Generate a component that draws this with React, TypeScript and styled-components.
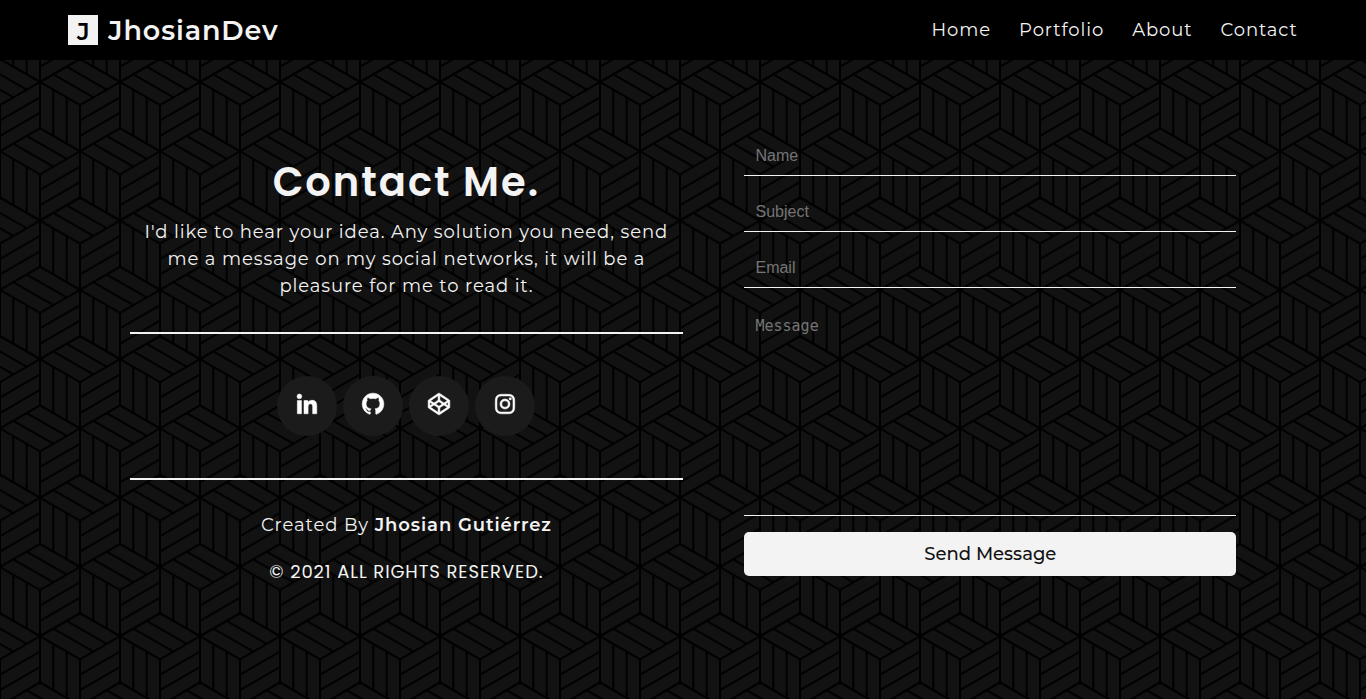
import React from 'react';
import styled, { createGlobalStyle } from 'styled-components';
import { BiLogoLinkedin, BiLogoGithub, BiLogoCodepen, BiLogoInstagram } from 'react-icons/bi';

const GlobalStyle = createGlobalStyle`
  *, *::before, *::after { box-sizing: border-box; }
  body {
    margin: 0;
    background: #121212;
    color: #f3f3f3;
    font-family: Montserrat, Inter, sans-serif;
    font-size: 18px;
    line-height: 27px;
    letter-spacing: 0.05em;
  }
`;

const Page = styled.div`
  position: relative;
  display: flex;
  flex-direction: column;
  min-height: 100vh;
  overflow: hidden;
`;

const Backdrop = styled.svg`
  position: absolute;
  inset: 0;
  width: 100%;
  height: 100%;
  z-index: -1;
`;

const Header = styled.header`
  display: flex;
  align-items: center;
  justify-content: space-between;
  height: 60px;
  padding: 0 5%;
  background: #000;
`;

const Brand = styled.a`
  display: flex;
  align-items: center;
  gap: 10px;
  color: #f3f3f3;
  font-size: 27px;
  font-weight: 600;
  text-decoration: none;
`;

const BrandMark = styled.span`
  display: flex;
  justify-content: center;
  align-items: flex-end;
  width: 30px;
  height: 30px;
  background: #f3f3f3;
  color: #000;
  font-size: 24px;
  font-weight: 600;
  letter-spacing: normal;
  line-height: 27px;
`;

const Nav = styled.nav`
  display: flex;
  gap: 28px;
`;

const NavLink = styled.a`
  color: #f3f3f3;
  text-decoration: none;
`;

const Contact = styled.main`
  display: grid;
  grid-template-columns: 1fr 1fr;
  width: 90%;
  margin: 0 auto;
  padding: 76px 0;
`;

const Intro = styled.section`
  display: flex;
  flex-direction: column;
  padding: 16px 0 0 10%;
  text-align: center;
`;

const Title = styled.h1`
  margin: 0 0 7px;
  font-family: Poppins, Inter, sans-serif;
  font-size: 40px;
  font-weight: 600;
  letter-spacing: 0.05em;
  line-height: 60px;
`;

const Lead = styled.p`
  margin: 0;
  padding: 0 12px;
`;

const Divider = styled.hr`
  width: 100%;
  height: 2px;
  margin: 0;
  border: 0;
  background: #f3f3f3;
`;

const Socials = styled.div`
  display: flex;
  justify-content: center;
  gap: 6px;
  padding: 42px 0;
`;

const SocialLink = styled.a`
  display: flex;
  align-items: center;
  justify-content: center;
  width: 60px;
  height: 60px;
  padding-bottom: 4px;
  border-radius: 50%;
  background: #1b1b1b;
  color: #fff;
  font-size: 26px;

  svg {
    overflow: visible;
    stroke: currentColor;
    stroke-width: 0.5;
  }
`;

const Block = styled.div`
  padding: 32px 0;
`;

const Footer = styled.footer`
  display: flex;
  flex-direction: column;
  gap: 19px;
  padding-top: 32px;
`;

const Line = styled.p<{ $caps?: boolean }>`
  margin: 0;
  font-family: ${(p) => (p.$caps ? 'Poppins, Inter, sans-serif' : 'inherit')};
`;

const Author = styled.strong`
  font-weight: 600;
`;

const Form = styled.form`
  display: flex;
  flex-direction: column;
  gap: 16px;
  padding: 0 10%;
`;

const Field = styled.input`
  width: 100%;
  height: 40px;
  padding: 0 11px;
  border: 0;
  border-bottom: 1px solid #f3f3f3;
  border-radius: 0;
  outline: none;
  background: transparent;
  color: #f3f3f3;
  font-family: "Liberation Sans", Arial, sans-serif;
  font-size: 16px;
  &::placeholder { color: #757575; }
`;

const MessageField = styled(Field).attrs({ as: 'textarea' })`
  display: block;
  height: 212px;
  padding: 13px 11px;
  resize: none;
  font-family: "DejaVu Sans Mono", monospace;
  font-size: 15px;
  line-height: 19px;
`;

const Submit = styled.button`
  height: 44px;
  border: 0;
  border-radius: 5px;
  background: #f3f3f3;
  color: #121212;
  font-family: inherit;
  font-size: 18px;
  font-weight: 500;
  cursor: pointer;
`;

const links = ['Home', 'Portfolio', 'About', 'Contact'];

const socials = [
  { name: 'LinkedIn', Icon: BiLogoLinkedin },
  { name: 'GitHub', Icon: BiLogoGithub },
  { name: 'CodePen', Icon: BiLogoCodepen },
  { name: 'Instagram', Icon: BiLogoInstagram },
];

// One cube: a striped lid on top of two striped sides.
const cube =
  'M0 0L40 -23.09L80 0L40 23.09ZM13.33 -7.7L53.33 15.4M26.67 -15.4L66.67 7.7' +
  'M0 0V46.19L40 69.28V23.09M13.33 7.7V53.89M26.67 15.4V61.58' +
  'M80 0V46.19L40 69.28M40 38.49L80 15.4M40 53.89L80 30.79';

const CubePattern = () => (
  <Backdrop aria-hidden="true">
    <defs>
      <pattern id="cubes" x="40" y="82" width="80" height="138.56" patternUnits="userSpaceOnUse">
        <rect width="80" height="138.56" fill="#121212" />
        <g fill="none" stroke="#000" strokeWidth="2">
          <path d={cube} />
          <path d={cube} transform="translate(-40 69.28)" />
          <path d={cube} transform="translate(40 69.28)" />
          <path d={cube} transform="translate(0 138.56)" />
        </g>
      </pattern>
    </defs>
    <rect width="100%" height="100%" fill="url(#cubes)" />
  </Backdrop>
);

export default function App() {
  return (
    <Page>
      <GlobalStyle />
      <CubePattern />
      <Header>
        <Brand href="#home">
          <BrandMark aria-hidden="true">J</BrandMark>
          JhosianDev
        </Brand>
        <Nav>
          {links.map((link) => (
            <NavLink key={link} href={`#${link.toLowerCase()}`}>{link}</NavLink>
          ))}
        </Nav>
      </Header>
      <Contact>
        <Intro>
          <Title>Contact Me.</Title>
          <Lead>
            I'd like to hear your idea. Any solution you need, send me a message on my social
            networks, it will be a pleasure for me to read it.
          </Lead>
          <Block>
            <Divider />
            <Socials>
              {socials.map(({ name, Icon }) => (
                <SocialLink key={name} href={`#${name.toLowerCase()}`} aria-label={name}>
                  <Icon />
                </SocialLink>
              ))}
            </Socials>
            <Divider />
            <Footer>
              <Line>Created By <Author>Jhosian Gutiérrez</Author></Line>
              <Line $caps>© 2021 ALL RIGHTS RESERVED.</Line>
            </Footer>
          </Block>
        </Intro>
        <Form onSubmit={(e) => e.preventDefault()}>
          <Field type="text" placeholder="Name" aria-label="Name" />
          <Field type="text" placeholder="Subject" aria-label="Subject" />
          <Field type="email" placeholder="Email" aria-label="Email" />
          <MessageField placeholder="Message" aria-label="Message" />
          <Submit type="submit">Send Message</Submit>
        </Form>
      </Contact>
    </Page>
  );
}
